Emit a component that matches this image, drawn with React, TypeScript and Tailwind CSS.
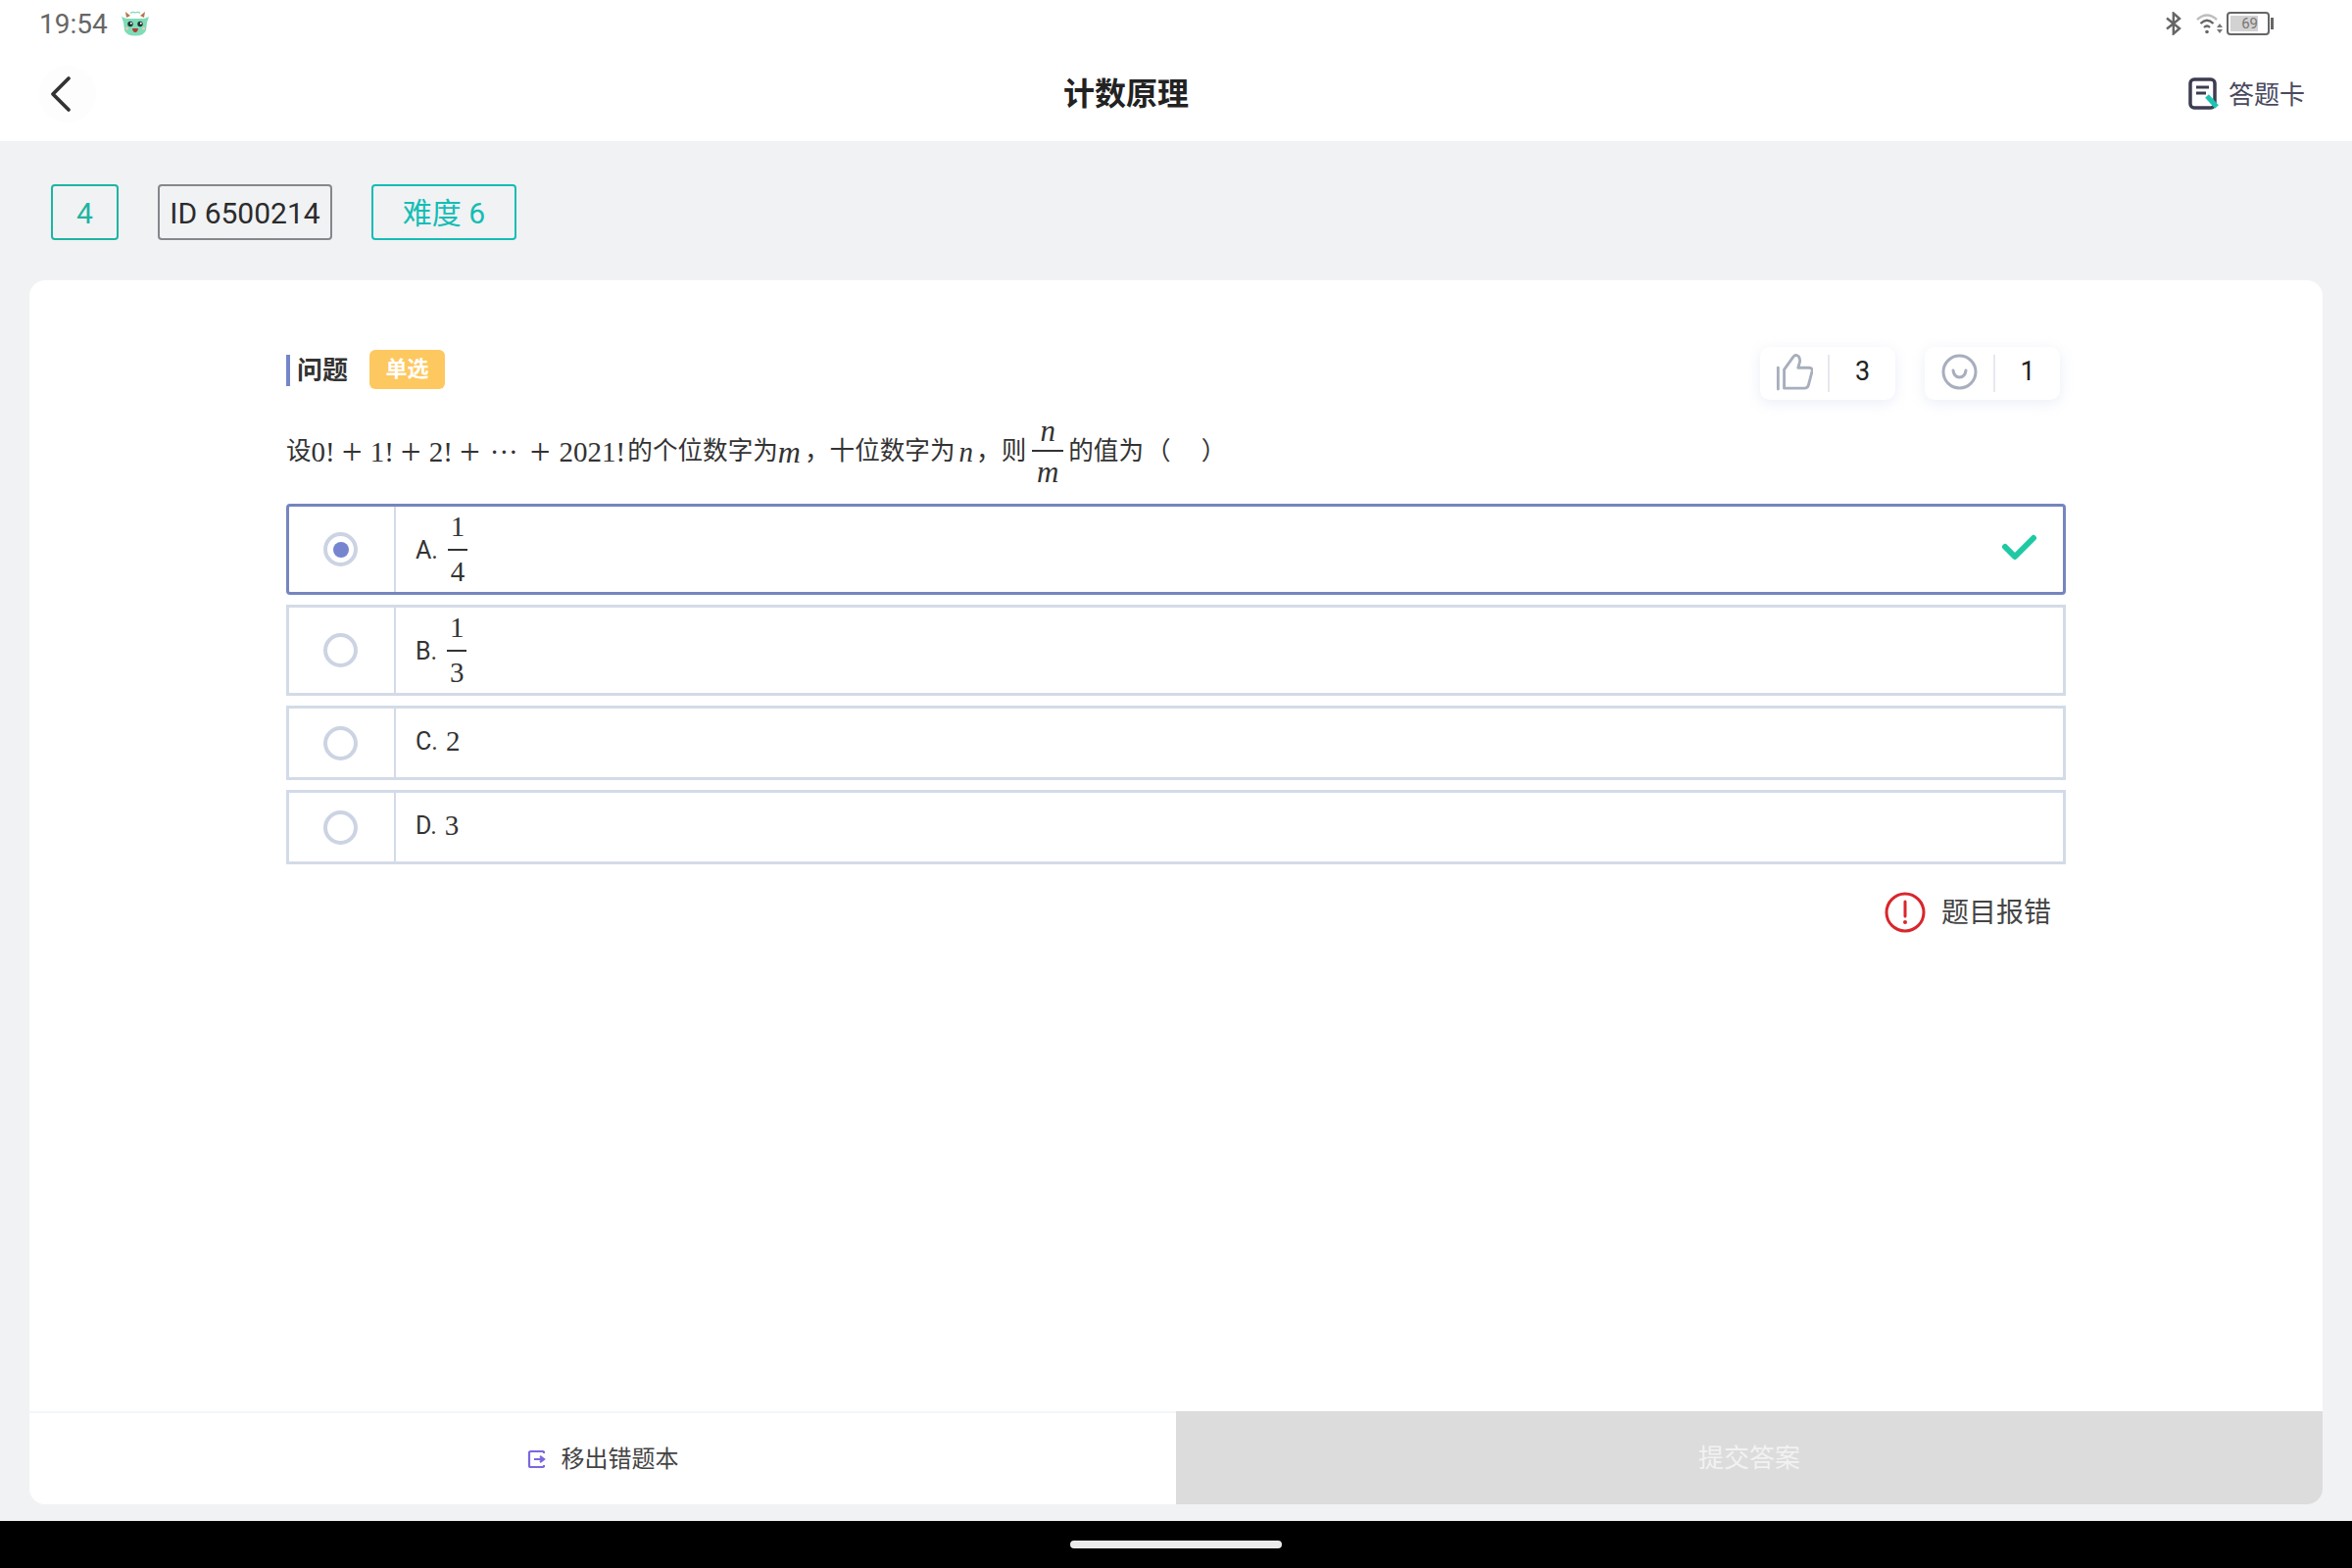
function Mascot() {
  return (
    <svg width="30" height="26" viewBox="0 0 30 26" className="ml-[13px]">
      <path d="M6 7 L5 1 L10 5 Z" fill="#b5764f" />
      <path d="M24 7 L25 1 L20 5 Z" fill="#b5764f" />
      <path d="M10 2.5 q2.5 -2 5 -.5 q3 -1.5 5 .5" fill="none" stroke="#7fdcb8" strokeWidth="1.2" />
      <path d="M1 6 L6 8 L24 8 L29 6 L27 12 L26 20 Q24 25.5 15 25.5 Q6 25.5 4 20 L3 12 Z" fill="#7fdcb8" />
      <circle cx="10" cy="13.5" r="2.7" fill="#23332f" />
      <circle cx="20" cy="13.5" r="2.7" fill="#23332f" />
      <circle cx="10.8" cy="12.7" r="1" fill="#fff" />
      <circle cx="20.8" cy="12.7" r="1" fill="#fff" />
      <path d="M12 18 H18 Q17.5 22 15 22 Q12.5 22 12 18 Z" fill="#b33a32" />
      <circle cx="6.5" cy="18" r="1.5" fill="#f2c9a8" />
      <circle cx="23.5" cy="18" r="1.5" fill="#f2c9a8" />
    </svg>
  )
}

function StatusIcons() {
  return (
    <div className="flex items-center">
      <svg width="18" height="24" viewBox="0 0 18 24" fill="none" stroke="#666" strokeWidth="2.4">
        <path d="M2 6.5 L15 17 L8.8 22.5 V1.5 L15 7 L2 17.5" />
      </svg>
      <svg width="28" height="24" viewBox="0 0 28 24" className="ml-[14px]">
        <path d="M1 8 Q11 -1 21 8" fill="none" stroke="#bdbdbd" strokeWidth="2.4" />
        <path d="M4.5 12 Q11 5.5 17.5 12" fill="none" stroke="#666" strokeWidth="2.4" />
        <path d="M8 16 Q11 13 14 16" fill="none" stroke="#666" strokeWidth="2.2" />
        <circle cx="11" cy="20.5" r="1.8" fill="#666" />
        <path d="M21 16 L24 12 L27 16 Z M21 18 L27 18 L24 22 Z" fill="#777" />
      </svg>
      <div className="ml-[3px] flex h-[24px] w-[44px] items-center rounded-[4px] border-2 border-[#666] p-[2px]">
        <div className="flex h-full w-[28px] items-center justify-end bg-[#d2d2d2] text-[15px] leading-none text-[#777]">69</div>
      </div>
      <div className="ml-[1px] h-[12px] w-[3px] bg-[#666]" />
    </div>
  )
}

function Frac({ top, bottom, className, rowH }: { top: string; bottom: string; className: string; rowH: string }) {
  return (
    <span className={`flex flex-col items-center font-['Liberation_Serif',serif] ${className}`}>
      <span className={`flex ${rowH} items-center leading-none`}>{top}</span>
      <span className="h-[2px] w-full shrink-0 bg-[#333]" />
      <span className={`flex ${rowH} items-center leading-none`}>{bottom}</span>
    </span>
  )
}

function M({ children, className = '' }: { children: string; className?: string }) {
  return <span className={`font-['Liberation_Serif',serif] text-[29px] leading-none ${className}`}>{children}</span>
}

function Plus({ ml }: { ml: string }) {
  return <span className={`font-['Liberation_Serif',serif] text-[37px] font-light leading-none ${ml}`}>+</span>
}

function Option({ label, labelClass, h, selected, children }: { label: string; labelClass: string; h: string; selected?: boolean; children: React.ReactNode }) {
  return (
    <div className={`flex w-full ${h} border-[3px] ${selected ? 'rounded-[4px] border-[#7585c0]' : 'border-[#d3dbe8]'}`}>
      <div className="flex w-[109px] items-center justify-center border-r-2 border-[#d3dbe8] pr-[2px]">
        <div className="flex h-[35px] w-[35px] items-center justify-center rounded-full border-4 border-[#ccd4e3]">
          {selected && <div className="h-[16px] w-[16px] rounded-full bg-[#7585cf]" />}
        </div>
      </div>
      <div className="flex flex-1 items-center pl-[20px] text-[25px] text-[#333]">
        <span className={labelClass}>{label}</span>
        {children}
      </div>
      {selected && (
        <svg width="38" height="28" viewBox="0 0 38 28" fill="none" className="mb-[3px] mr-[25px] self-center">
          <path d="M4 13 L14 23 L33 4" stroke="#1fc9a3" strokeWidth="6" strokeLinecap="round" strokeLinejoin="round" />
        </svg>
      )}
    </div>
  )
}

export default function App() {
  return (
    <div className="flex h-[1600px] w-[2400px] flex-col overflow-hidden bg-black font-['Roboto','Noto_Sans_CJK_SC',sans-serif]">
      <header className="h-[144px] bg-white">
        <div className="flex h-[48px] items-center justify-between pl-[40px] pr-[80px]">
          <div className="flex items-center">
            <span className="mt-[1px] text-[28px] leading-none text-[#666]">19:54</span>
            <Mascot />
          </div>
          <StatusIcons />
        </div>
        <div className="flex h-[96px] items-center pl-[40px] pr-[48px]">
          <div className="flex h-[58px] w-[58px] items-center rounded-full bg-[#fdfdfd] pl-[10px]">
            <svg width="24" height="38" viewBox="0 0 24 38" fill="none">
              <path d="M20 3 L4 19 L20 35" stroke="#333" strokeWidth="3.8" strokeLinecap="round" strokeLinejoin="round" />
            </svg>
          </div>
          <h1 className="ml-[987px] text-[32px] font-bold leading-none text-[#222]">计数原理</h1>
          <div className="ml-auto flex items-center text-[26px] text-[#4a4a5e]">
            <svg width="32" height="34" viewBox="0 0 32 34" fill="none">
              <rect x="2" y="2" width="25" height="29" rx="4" stroke="#3d3d50" strokeWidth="3.5" />
              <path d="M8 10 H21 M8 16 H18" stroke="#3d3d50" strokeWidth="3" />
              <path d="M19 19 L29 30" stroke="#1cc4b4" strokeWidth="5" />
            </svg>
            <span className="ml-[9px] mt-[1px] leading-none">答题卡</span>
          </div>
        </div>
      </header>

      <main className="flex flex-1 flex-col bg-[#f1f2f4] pt-[44px]">
        <div className="flex gap-[40px] pl-[52px] text-[30px] leading-none">
          <div className="flex h-[57px] w-[69px] items-center justify-center rounded-[4px] border-2 border-[#1db5a2] pt-[2px] text-[#1db5a2]">4</div>
          <div className="flex h-[57px] w-[178px] items-center justify-center rounded-[4px] border-2 border-[#85878c] pt-[2px] text-[#2b2b2b]">ID 6500214</div>
          <div className="flex h-[57px] w-[148px] items-center justify-center rounded-[4px] border-2 border-[#14bdb5] pt-[2px] text-[#14bdb5]">难度 6</div>
        </div>

        <section className="mx-[30px] mt-[41px] flex h-[1249px] flex-col overflow-hidden rounded-[16px] bg-white">
          <div className="flex-1 px-[262px] pt-[68px]">
            <div className="flex h-[54px] items-start justify-between">
              <div className="flex items-center">
                <div className="mt-[5px] flex h-[32px] items-center border-l-4 border-[#7585c9] pl-[7px] text-[26px] font-bold leading-none text-[#333]">问题</div>
                <div className="ml-[22px] mt-[3px] flex h-[40px] w-[77px] items-center justify-center rounded-[6px] bg-[#fec860] text-[22px] font-bold leading-none text-white">单选</div>
              </div>
              <div className="mr-[6px] flex gap-[30px] text-[27px] leading-none text-[#222]">
                <div className="flex h-[54px] w-[138px] items-center rounded-[10px] bg-white shadow-[0_3px_14px_rgba(140,160,210,0.18)]">
                  <div className="mb-[3px] flex w-[69px] justify-center">
                    <svg width="38" height="38" viewBox="0 0 40 40" fill="none" stroke="#a7aebd" strokeWidth="3" strokeLinejoin="round" strokeLinecap="round">
                      <path d="M2.5 15 V38" />
                      <path d="M9 17 V37 H31 Q34 37 35 34 L39 19 Q39.5 15 36 15 H24 L26 8 Q26 1.5 21 1.5 L19 3 L9 17" />
                    </svg>
                  </div>
                  <div className="h-[38px] w-[2px] bg-[#e6e8ee]" />
                  <span className="mb-[3px] flex-1 text-center">3</span>
                </div>
                <div className="flex h-[54px] w-[138px] items-center rounded-[10px] bg-white shadow-[0_3px_14px_rgba(140,160,210,0.18)]">
                  <div className="mb-[3px] flex w-[70px] justify-center">
                    <svg width="37" height="37" viewBox="0 0 37 37" fill="none" stroke="#a7aebd" strokeWidth="3" strokeLinecap="round">
                      <circle cx="18.5" cy="18.5" r="16.5" />
                      <path d="M12 17 Q13 24 18.5 24 Q24 24 25 17" />
                    </svg>
                  </div>
                  <div className="h-[38px] w-[2px] bg-[#e6e8ee]" />
                  <span className="mb-[3px] flex-1 text-center">1</span>
                </div>
              </div>
            </div>

            <div className="mt-[23px] flex h-[60px] items-center whitespace-nowrap text-[25.6px] leading-none text-[#333]">
              <span>设</span>
              <M>0!</M>
              <Plus ml="ml-[7px]" />
              <M className="ml-[8px]">1!</M>
              <Plus ml="ml-[7px]" />
              <M className="ml-[8px]">2!</M>
              <Plus ml="ml-[7px]" />
              <M className="ml-[10px]">···</M>
              <Plus ml="ml-[12px]" />
              <M className="ml-[9px]">2021!</M>
              <span className="ml-[2px]">的个位数字为</span>
              <M className="text-[32px] italic">m</M>
              <span className="ml-[4px]">，十位数字为</span>
              <M className="ml-[4px] italic">n</M>
              <span className="ml-[3px]">，则</span>
              <Frac top="n" bottom="m" rowH="h-[40px]" className="mb-[2px] ml-[6px] w-[32px] text-[31px] italic" />
              <span className="ml-[5px]">的值为</span>
              <span className="ml-[2px]">（</span>
              <span className="ml-[31px]">）</span>
            </div>

            <div className="mt-[23px] flex flex-col gap-[10px]">
              <Option label="A." labelClass="mt-[2px]" h="h-[93px]" selected>
                <Frac top="1" bottom="4" rowH="h-[44px]" className="ml-[10px] w-[20px] text-[29px]" />
              </Option>
              <Option label="B." labelClass="mt-[2px]" h="h-[93px]">
                <Frac top="1" bottom="3" rowH="h-[44px]" className="ml-[10px] w-[20px] text-[29px]" />
              </Option>
              <Option label="C." labelClass="mb-[2px]" h="h-[76px]">
                <span className="mb-[2px] ml-[8px] font-['Liberation_Serif',serif] text-[29px]">2</span>
              </Option>
              <Option label="D." labelClass="mb-[2px]" h="h-[76px]">
                <span className="mb-[2px] ml-[8px] font-['Liberation_Serif',serif] text-[29px]">3</span>
              </Option>
            </div>

            <div className="mt-[28px] flex items-center justify-end pr-[15px]">
              <svg width="42" height="42" viewBox="0 0 42 42" fill="none">
                <circle cx="21" cy="21" r="19" stroke="#d9262c" strokeWidth="3" />
                <path d="M21 10 V25" stroke="#d9262c" strokeWidth="3" strokeLinecap="round" />
                <circle cx="21" cy="31" r="2" fill="#d9262c" />
              </svg>
              <span className="ml-[16px] mt-[2px] text-[28px] leading-none text-[#444]">题目报错</span>
            </div>
          </div>

          <div className="flex h-[95px]">
            <div className="flex w-1/2 items-center justify-center border-t-2 border-[#f3f7f9] text-[24px] text-[#444]">
              <svg width="20" height="20" viewBox="0 0 20 20" fill="none" stroke="#7a67e0" strokeWidth="2.2">
                <path d="M17 4 V3 Q17 2 16 2 H3.5 Q2 2 2 3.5 V16.5 Q2 18 3.5 18 H16 Q17 18 17 17 V16" />
                <path d="M7 10 H16 M13 7 L17 10 L13 13" />
              </svg>
              <span className="ml-[15px] leading-none">移出错题本</span>
            </div>
            <div className="flex w-1/2 items-center justify-center bg-[#dcdcdc] text-[26px] leading-none text-[#f2f2f2]">提交答案</div>
          </div>
        </section>

        <div className="h-[17px]" />
      </main>

      <footer className="flex h-[48px] items-center justify-center bg-black">
        <div className="h-[8px] w-[216px] rounded-full bg-[#ebebeb]" />
      </footer>
    </div>
  )
}
